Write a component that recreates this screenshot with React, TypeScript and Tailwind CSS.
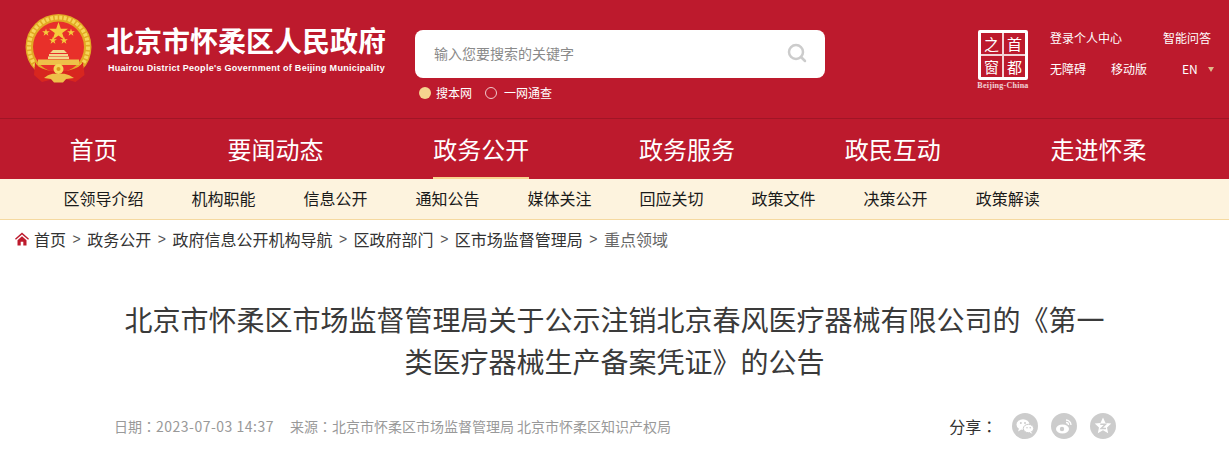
const navItems = ["首页", "要闻动态", "政务公开", "政务服务", "政民互动", "走进怀柔"];
const subItems = ["区领导介绍", "机构职能", "信息公开", "通知公告", "媒体关注", "回应关切", "政策文件", "决策公开", "政策解读"];
const crumbs = ["政务公开", "政府信息公开机构导航", "区政府部门", "区市场监督管理局"];

function Emblem() {
  return (
    <svg viewBox="0 0 70 72" className="h-[72px] w-[70px] shrink-0">
      <circle cx="34.500" cy="35" r="33" fill="#e2a924" />
      <circle cx="34.500" cy="35" r="29.500" fill="none" stroke="#f6d557" strokeWidth="4" strokeDasharray="3 1.500" />
      <circle cx="34.500" cy="35" r="25.500" fill="#e8302a" />
      <path d="M34.500 10l2.300 6.800H44l-5.800 4.200 2.200 6.800-5.900-4.200-5.900 4.200 2.200-6.800-5.800-4.200h7.200z" fill="#f5cb3c" />
      <path d="M22 16.500l.9 2.800h3l-2.400 1.700.9 2.800-2.400-1.700-2.400 1.700.9-2.800-2.400-1.700h3zM47 16.500l.9 2.800h3l-2.400 1.700.9 2.800-2.400-1.700-2.400 1.700.9-2.800-2.400-1.700h3zM29 24.500l.9 2.800h3l-2.400 1.700.9 2.800-2.400-1.700-2.400 1.700.9-2.800-2.400-1.700h3zM40 24.500l.9 2.800h3l-2.400 1.700.9 2.800-2.400-1.700-2.400 1.700.9-2.800-2.400-1.700h3z" fill="#f5cb3c" />
      <path d="M26 41l3-3h11l3 3zM25 42h19v2H25zM24 44.500h21V47H24z" fill="#f3d98b" />
      <path d="M14 47.500h41V53H14z" fill="#eec049" />
      <path d="M11 50c3 6 10 9 23.500 9.500C48 59 55 56 59 50l1.500 13-9 7-16-4.500L18 70l-8-7z" fill="#d8261f" />
      <path d="M20 66c5-4 9-4.500 14.500-4.500S44 62 50 66l-8 1-3 3.500h-9L27 67z" fill="#eec049" />
      <circle cx="34.500" cy="57" r="5" fill="#f6d557" />
      <circle cx="34.500" cy="57" r="2" fill="#d99a1c" />
    </svg>
  );
}

function CapitalLogo() {
  return (
    <div className="flex w-[54px] flex-col items-center">
      <div className="grid h-[50px] w-[50px] grid-cols-2 grid-rows-2 gap-[2px] rounded-[2px] border-[3px] border-white bg-white/80">
        {["之", "首", "窗", "都"].map((c) => (
          <div
            key={c}
            className="flex h-[21px] items-center justify-center overflow-hidden bg-[#bd1a2d] text-[15px] leading-[15px] text-white"
          >
            {c}
          </div>
        ))}
      </div>
      <div className="mt-[1px] whitespace-nowrap font-['Liberation_Serif',serif] text-[8px] font-bold leading-[10px] tracking-[0.25px] text-white/80">
        Beijing-China
      </div>
    </div>
  );
}

function ShareIcon({ children }: { children: React.ReactNode }) {
  return (
    <div className="flex h-[26px] w-[26px] items-center justify-center rounded-full bg-[#cccccc]">
      <svg viewBox="0 0 26 26" className="h-[26px] w-[26px]" fill="white">
        {children}
      </svg>
    </div>
  );
}

function Sep() {
  return <span className="mx-[6.5px] font-['Liberation_Sans',sans-serif] text-[14px] text-[#555555]">&gt;</span>;
}

function Colon() {
  return <span className="font-['Noto_Sans_CJK_TC',sans-serif]">：</span>;
}

export default function App() {
  return (
    <div className="h-[460px] w-[1229px] overflow-hidden bg-white font-['Noto_Sans_CJK_SC','Liberation_Sans',sans-serif]">
      <header className="flex h-[119px] border-b border-[#a01526] bg-[#bd1a2d]">
        <div className="ml-[24px] mt-[12px]">
          <Emblem />
        </div>
        <div className="ml-[13px] mt-[24px] w-[279px]">
          <div className="-ml-[1px] whitespace-nowrap text-[28px] font-bold leading-[32px] text-white">北京市怀柔区人民政府</div>
          <div className="ml-[1px] mt-[6px] whitespace-nowrap font-['Liberation_Sans',sans-serif] text-[9px] font-bold leading-[12px] tracking-[0.28px] text-white">
            Huairou District People's Government of Beijing Municipality
          </div>
        </div>
        <div className="ml-[29px] mt-[30px] w-[410px]">
          <div className="flex h-[48px] items-center justify-between rounded-[8px] bg-white pb-[2px] pl-[19px] pr-[18px]">
            <span className="text-[14px] text-[#8a8a8a]">输入您要搜索的关键字</span>
            <svg viewBox="0 0 20 20" className="h-[20px] w-[20px]" fill="none" stroke="#cccccc" strokeWidth="2.500">
              <circle cx="9" cy="9" r="7" />
              <path d="M14 14l4 4" strokeLinecap="round" />
            </svg>
          </div>
          <div className="mt-[7px] flex items-center pl-[4px] text-[12px] leading-[16px] text-white">
            <span className="h-[12px] w-[12px] rounded-full bg-[#f5d48e]" />
            <span className="ml-[5px]">搜本网</span>
            <span className="ml-[13px] h-[12px] w-[12px] rounded-full border border-[#f0c9cc]" />
            <span className="ml-[7px]">一网通查</span>
          </div>
        </div>
        <div className="ml-[151px] mt-[30px]">
          <CapitalLogo />
        </div>
        <div className="ml-[20px] mt-[30px] text-[12px] leading-[16px] text-white">
          <div className="flex">
            <span className="w-[113px]">登录个人中心</span>
            <span>智能问答</span>
          </div>
          <div className="mt-[15px] flex items-center">
            <span className="w-[61px]">无障碍</span>
            <span className="w-[71px]">移动版</span>
            <span>EN</span>
            <span className="ml-[10px] h-0 w-0 border-x-[3px] border-t-[5px] border-x-transparent border-t-[#e0b98a]" />
          </div>
        </div>
      </header>

      <nav className="flex h-[60px] gap-[110px] bg-[#bd1a2d] pl-[70px] text-[24px] text-white">
        {navItems.map((item) => (
          <div
            key={item}
            className={`-ml-[0.25px] flex items-center whitespace-nowrap border-b-2 pt-[1px] ${item === "政务公开" ? "border-[#f9d48f]" : "border-transparent"}`}
          >
            {item}
          </div>
        ))}
      </nav>

      <div className="flex h-[41px] items-center gap-[48px] border-b border-[#f5d9a0] bg-[#fdf3de] pb-[2px] pl-[63.5px] text-[16px] text-[#1a1a1a]">
        {subItems.map((item) => (
          <span key={item} className="whitespace-nowrap">{item}</span>
        ))}
      </div>

      <div className="mt-[7px] flex h-[24px] items-center whitespace-nowrap pl-[15px] text-[16px] leading-[24px] text-[#333333]">
        <svg viewBox="0 0 14 14" className="mr-[5px] h-[14px] w-[14px]" fill="#bd1a2d">
          <path d="M7 .5L0 6.800l.9 1L7 2.400l6.100 5.400.9-1z" />
          <path d="M2.500 8.300L7 4.300l4.500 4V13.500H8.300V9.800H5.700v3.700H2.500z" />
        </svg>
        <span>首页</span>
        {crumbs.map((c) => (
          <span key={c} className="flex items-center">
            <Sep />
            {c}
          </span>
        ))}
        <Sep />
        <span className="text-[#666666]">重点领域</span>
      </div>

      <h1 className="mx-auto mt-[47px] w-[990px] text-center text-[28px] font-normal leading-[42px] text-[#3a3a3a]">
        北京市怀柔区市场监督管理局关于公示注销北京春风医疗器械有限公司的《第一类医疗器械生产备案凭证》的公告
      </h1>

      <div className="mt-[29px] flex h-[30px] items-center pl-[114px] text-[14px] text-[#999999]">
        <span>
          日期<Colon />
          <span className="tracking-[0.5px]">2023-07-03 14:37</span>
        </span>
        <span className="ml-[16px]">
          来源<Colon />北京市怀柔区市场监督管理局 北京市怀柔区知识产权局
        </span>
        <span className="ml-[278px] text-[16px] text-[#333333]">
          分享<Colon />
        </span>
        <div className="ml-[15px] flex gap-[13px]">
          <ShareIcon>
            <ellipse cx="11" cy="11.500" rx="6.500" ry="5.300" />
            <path d="M7 15.500l-1 3 3.500-2z" />
            <circle cx="8.800" cy="10" r="1" fill="#cccccc" />
            <circle cx="13" cy="10" r="1" fill="#cccccc" />
            <ellipse cx="16.500" cy="15.500" rx="5.200" ry="4.200" stroke="#cccccc" />
            <path d="M19 18.800l1.500 2-3-1.300z" />
            <circle cx="15" cy="14.800" r=".8" fill="#cccccc" />
            <circle cx="18.200" cy="14.800" r=".8" fill="#cccccc" />
          </ShareIcon>
          <ShareIcon>
            <ellipse cx="11.500" cy="16" rx="6.500" ry="4.500" />
            <circle cx="11" cy="16" r="2.200" fill="#cccccc" />
            <path d="M15 7a5 5 0 0 1 5 5M15 9.500a2.500 2.500 0 0 1 2.500 2.500" fill="none" stroke="white" strokeWidth="1.300" />
          </ShareIcon>
          <ShareIcon>
            <path d="M13 4.500l2.500 5.400 5.800.6-4.300 3.900 1.200 5.800-5.200-3-5.200 3 1.200-5.800-4.300-3.900 5.800-.6z" />
            <path d="M10.300 11.300h5.200l-4.300 4.200h4.800" fill="none" stroke="#cccccc" strokeWidth="1.500" />
          </ShareIcon>
        </div>
      </div>
    </div>
  );
}
